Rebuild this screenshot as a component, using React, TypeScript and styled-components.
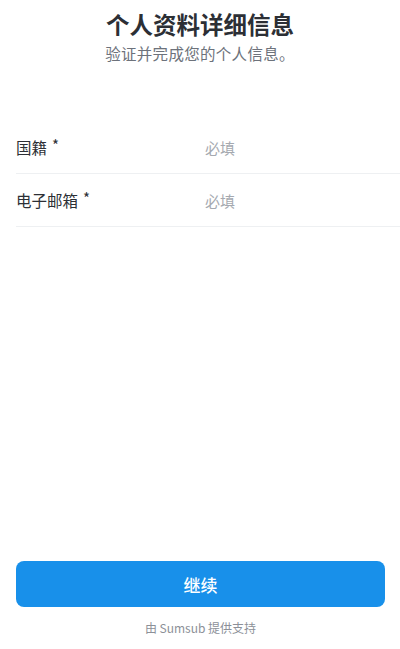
import styled, { createGlobalStyle } from "styled-components";

const GlobalStyle = createGlobalStyle`
  html, body {
    margin: 0;
    padding: 0;
    background: #ffffff;
  }
  body {
    font-family: "Noto Sans CJK SC", "Noto Sans", "Liberation Sans", sans-serif;
  }
  * {
    box-sizing: border-box;
  }
`;

const Page = styled.div`
  display: flex;
  flex-direction: column;
  height: 649px;
  background: #fff;
`;

const Header = styled.header`
  display: flex;
  flex-direction: column;
  align-items: center;
  padding-top: 7px;
`;

const Title = styled.h1`
  margin: 0;
  font-size: 23.5px;
  line-height: 34px;
  font-weight: 700;
  color: #2c2f35;
`;

const Subtitle = styled.p`
  margin: 1px 0 0;
  font-size: 15.5px;
  line-height: 22px;
  letter-spacing: 0.3px;
  color: #6d727b;
`;

const Form = styled.div`
  display: flex;
  flex-direction: column;
  margin: 57px 0 0 16px;
`;

const Row = styled.div`
  display: grid;
  grid-template-columns: 189px 1fr;
  align-items: center;
  height: 53px;
  border-bottom: 1px solid #eef0f2;
`;

const Label = styled.span`
  font-size: 15.5px;
  color: #2c2f35;
`;

const Star = styled.sup`
  margin-left: 5px;
  font-size: 15px;
  line-height: 0;
  vertical-align: 3px;
`;

const Placeholder = styled.span`
  font-size: 15px;
  color: #a5a9b0;
`;

const Footer = styled.footer`
  margin-top: auto;
  display: flex;
  flex-direction: column;
  align-items: center;
  padding: 0 15px 12px 16px;
`;

const Button = styled.button`
  width: 100%;
  height: 46px;
  border: none;
  border-radius: 8px;
  background: #1890ea;
  color: #fff;
  font-family: inherit;
  font-size: 17px;
  font-weight: 500;
  cursor: pointer;
`;

const Powered = styled.div`
  margin-top: 12px;
  font-size: 12px;
  line-height: 18px;
  color: #8c9098;
`;

const fields = ["国籍", "电子邮箱"];

export default function App() {
  return (
    <>
      <GlobalStyle />
      <Page>
        <Header>
          <Title>个人资料详细信息</Title>
          <Subtitle>验证并完成您的个人信息。</Subtitle>
        </Header>
        <Form>
          {fields.map((f) => (
            <Row key={f}>
              <Label>
                {f}
                <Star>*</Star>
              </Label>
              <Placeholder>必填</Placeholder>
            </Row>
          ))}
        </Form>
        <Footer>
          <Button>继续</Button>
          <Powered>由 Sumsub 提供支持</Powered>
        </Footer>
      </Page>
    </>
  );
}
